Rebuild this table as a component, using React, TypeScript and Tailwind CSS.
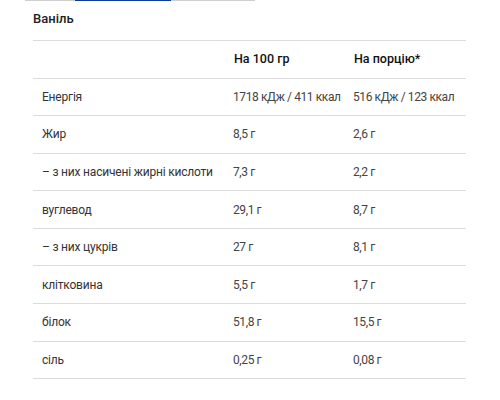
import React from "react";

const rows: [string, string, string][] = [
  ["Енергія", "1718 кДж / 411 ккал", "516 кДж / 123 ккал"],
  ["Жир", "8,5 г", "2,6 г"],
  ["– з них насичені жирні кислоти", "7,3 г", "2,2 г"],
  ["вуглевод", "29,1 г", "8,7 г"],
  ["– з них цукрів", "27 г", "8,1 г"],
  ["клітковина", "5,5 г", "1,7 г"],
  ["білок", "51,8 г", "15,5 г"],
  ["сіль", "0,25 г", "0,08 г"],
];

export default function App() {
  return (
    <div className="w-[500px] h-[400px] bg-white overflow-hidden" style={{ fontFamily: "Roboto, 'Noto Sans', sans-serif" }}>
      <div className="ml-[25px] w-[230px] h-px bg-[#cfcfcf] flex">
        <div className="ml-[50px] w-[96px] h-px bg-[#0a3a9c]" />
      </div>
      <div className="ml-[33px] w-[433px]">
        <div className="h-[40px] flex items-center pb-[4px] text-[13px] font-medium text-[#222] border-b border-[#dcdcdc]">
          Ваніль
        </div>
        <div className="h-[37.5px] flex items-center border-b border-[#dcdcdc] text-[12.5px] font-medium text-[#111]">
          <div className="w-[200px]" />
          <div className="w-[120px] pl-[1px]">На 100 гр</div>
          <div className="pl-[1px]">На порцію*</div>
        </div>
        {rows.map((r) => (
          <div key={r[0]} className="h-[37.6px] flex items-center border-b border-[#dcdcdc] text-[12px] text-[#333]">
            <div className="w-[200px] pl-[9px] tracking-[-0.2px]">{r[0]}</div>
            <div className="w-[120px] text-[#444] tracking-[-0.4px]">{r[1]}</div>
            <div className="text-[#444] tracking-[-0.4px]">{r[2]}</div>
          </div>
        ))}
      </div>
    </div>
  );
}
